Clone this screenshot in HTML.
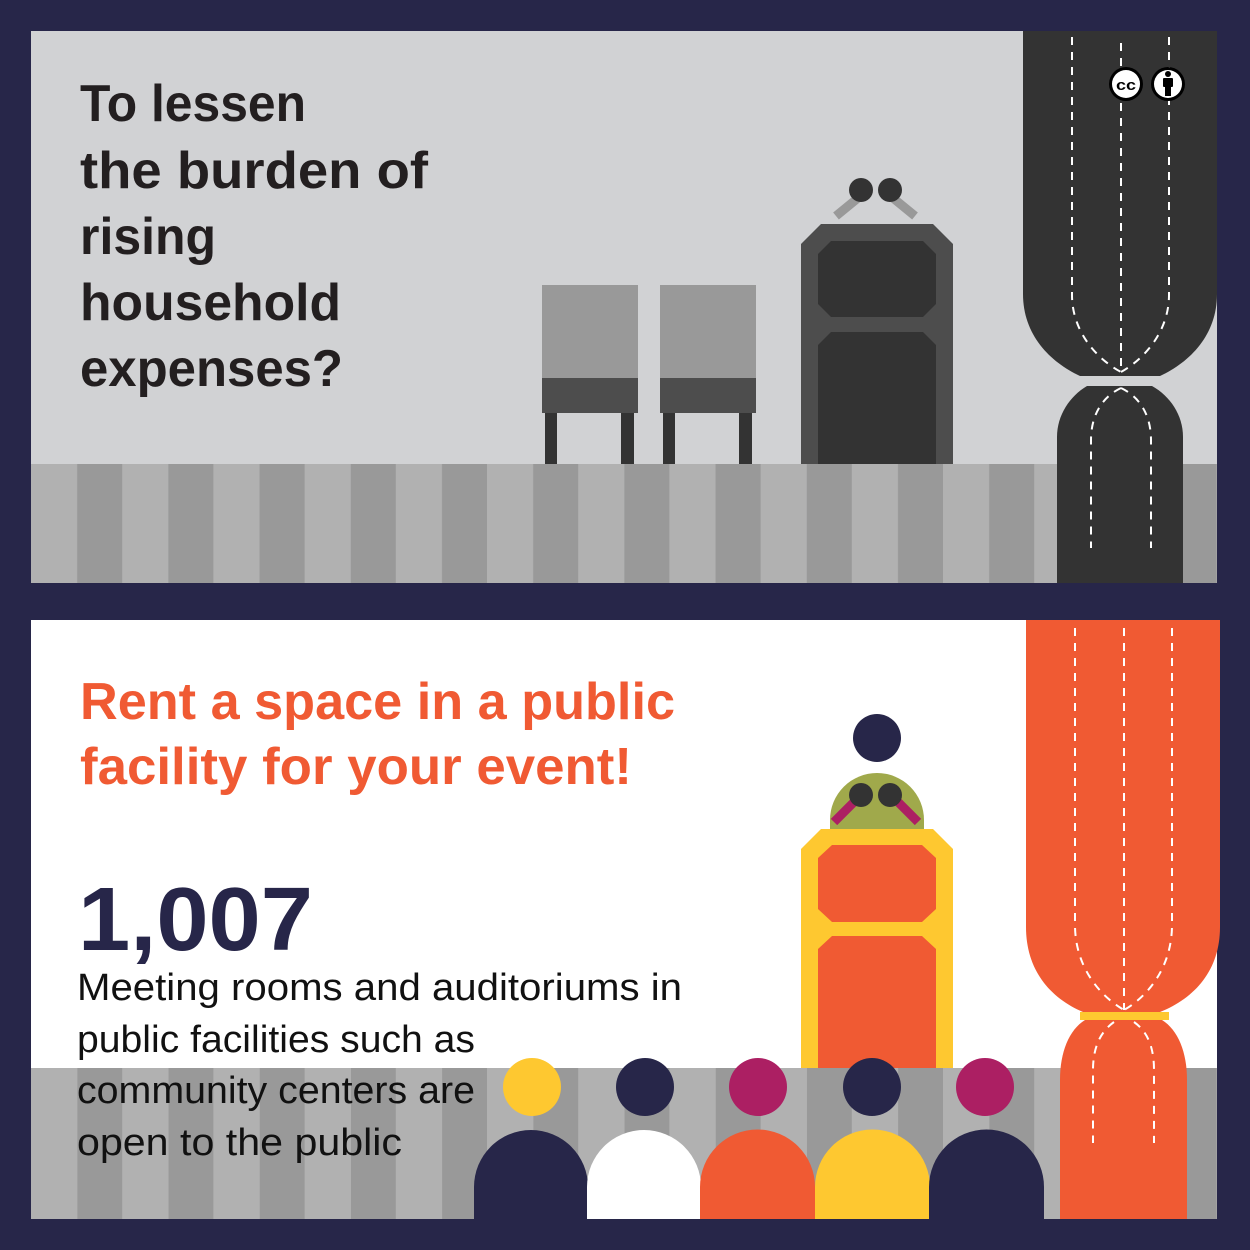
<!DOCTYPE html>
<html><head><meta charset="utf-8"><style>
html,body{margin:0;padding:0;background:#272649;}
svg{display:block}
</style></head><body>
<svg width="1250" height="1250" viewBox="0 0 1250 1250" xmlns="http://www.w3.org/2000/svg">
<defs>
<pattern id="st" patternUnits="userSpaceOnUse" x="31" y="0" width="91.2" height="10">
<rect x="0" y="0" width="46" height="10" fill="#b1b1b1"/>
<rect x="46" y="0" width="45.2" height="10" fill="#999999"/>
</pattern>
</defs>
<rect width="1250" height="1250" fill="#272649"/>
<!-- TOP PANEL -->
<rect x="31" y="31" width="1186" height="552" fill="#d1d2d4"/>
<rect x="31" y="464" width="1186" height="119" fill="url(#st)"/>
<g>
<rect x="542" y="285" width="96" height="93" fill="#999"/>
<rect x="542" y="378" width="96" height="35" fill="#4d4d4d"/>
<rect x="545" y="413" width="12" height="51" fill="#333"/>
<rect x="621" y="413" width="13" height="51" fill="#333"/>
<rect x="660" y="285" width="96" height="93" fill="#999"/>
<rect x="660" y="378" width="96" height="35" fill="#4d4d4d"/>
<rect x="663" y="413" width="12" height="51" fill="#333"/>
<rect x="739" y="413" width="13" height="51" fill="#333"/>
</g>
<line x1="836" y1="216" x2="858" y2="198" stroke="#999" stroke-width="9"/>
<line x1="915" y1="216" x2="893" y2="198" stroke="#999" stroke-width="9"/>
<ellipse cx="861" cy="190" rx="12" ry="12" fill="#333"/>
<ellipse cx="890" cy="190" rx="12" ry="12" fill="#333"/>
<polygon points="821,224 933,224 953,244 953,464 801,464 801,244" fill="#4d4d4d"/>
<polygon points="831,241 923,241 936,254 936,304 923,317 831,317 818,304 818,254" fill="#333"/>
<polygon points="831,332 923,332 936,345 936,464 818,464 818,345" fill="#333"/>
<path d="M1023,31 H1217 V294 C1217,335 1190,362 1160,376 H1080 C1050,362 1023,335 1023,294 Z" fill="#333"/>
<path d="M1087,386 H1152 C1170,396 1183,415 1183,437 V583 H1057 V437 C1057,415 1070,396 1087,386 Z" fill="#333"/>
<g fill="none" stroke="#fff" stroke-width="2" stroke-dasharray="8,7">
<line x1="1121" y1="43" x2="1121" y2="372"/>
<path d="M1072,37 V295 C1072,330 1095,358 1121,372"/>
<path d="M1169,37 V295 C1169,330 1146,358 1121,372"/>
<path d="M1121,388 C1100,398 1091,418 1091,440 V548"/>
<path d="M1121,388 C1142,398 1151,418 1151,440 V548"/>
</g>
<circle cx="1126" cy="84" r="17" fill="#000"/>
<circle cx="1126" cy="84" r="14" fill="#fff"/>
<text x="1126" y="90" font-family="Liberation Sans, sans-serif" font-weight="bold" font-size="15" text-anchor="middle" fill="#000" textLength="20" lengthAdjust="spacingAndGlyphs">cc</text>
<circle cx="1168" cy="84" r="17" fill="#000"/>
<circle cx="1168" cy="84" r="14" fill="#fff"/>
<circle cx="1168" cy="74" r="3" fill="#000"/>
<rect x="1163" y="78" width="10" height="9" rx="1" fill="#000"/>
<rect x="1165" y="86" width="6" height="10" fill="#000"/>
<g font-family="Liberation Sans, sans-serif" font-weight="bold" font-size="52" fill="#231f20">
<text x="80" y="121" textLength="226" lengthAdjust="spacingAndGlyphs">To lessen</text>
<text x="80" y="188" textLength="348" lengthAdjust="spacingAndGlyphs">the burden of</text>
<text x="80" y="254" textLength="136" lengthAdjust="spacingAndGlyphs">rising</text>
<text x="80" y="320" textLength="261" lengthAdjust="spacingAndGlyphs">household</text>
<text x="80" y="386" textLength="263" lengthAdjust="spacingAndGlyphs">expenses?</text>
</g>
<!-- BOTTOM PANEL -->
<rect x="31" y="620" width="1186" height="599" fill="#fff"/>
<rect x="31" y="1068" width="1186" height="151" fill="url(#st)"/>
<path d="M1026,620 H1220 V927 C1220,970 1195,998 1160,1012 H1083 C1050,998 1026,970 1026,927 Z" fill="#f05a33"/>
<path d="M1085,1020 H1162 C1178,1030 1187,1052 1187,1080 V1219 H1060 V1080 C1060,1052 1069,1030 1085,1020 Z" fill="#f05a33"/>
<rect x="1080" y="1012" width="89" height="8" fill="#fec830"/>
<g fill="none" stroke="#fff" stroke-width="2" stroke-dasharray="8,7">
<line x1="1124" y1="628" x2="1124" y2="1010"/>
<path d="M1075,628 V925 C1075,965 1098,995 1124,1010"/>
<path d="M1172,628 V925 C1172,965 1150,995 1124,1010"/>
<path d="M1114,1022 C1100,1032 1093,1048 1093,1070 V1143"/>
<path d="M1134,1022 C1148,1032 1154,1048 1154,1070 V1143"/>
</g>
<circle cx="877" cy="738" r="24" fill="#272649"/>
<path d="M830,829 V820 A47,47 0 0 1 924,820 V829 Z" fill="#a0a94b"/>
<line x1="834" y1="822" x2="855" y2="801" stroke="#ac1f63" stroke-width="9"/>
<line x1="918" y1="822" x2="897" y2="801" stroke="#ac1f63" stroke-width="9"/>
<circle cx="861" cy="795" r="12" fill="#333"/>
<circle cx="890" cy="795" r="12" fill="#333"/>
<polygon points="821,829 933,829 953,849 953,1068 801,1068 801,849" fill="#fec830"/>
<polygon points="832,845 922,845 936,858 936,909 922,922 832,922 818,909 818,858" fill="#f05a33"/>
<polygon points="832,936 922,936 936,949 936,1068 818,1068 818,949" fill="#f05a33"/>
<circle cx="532" cy="1087" r="29" fill="#fec830"/>
<circle cx="645" cy="1087" r="29" fill="#272649"/>
<circle cx="758" cy="1087" r="29" fill="#ac1f63"/>
<circle cx="872" cy="1087" r="29" fill="#272649"/>
<circle cx="985" cy="1087" r="29" fill="#ac1f63"/>
<path d="M474,1219 V1187 A57,57 0 0 1 588,1187 V1219 Z" fill="#272649"/>
<path d="M587,1219 V1187 A57,57 0 0 1 701,1187 V1219 Z" fill="#fff"/>
<path d="M700,1219 V1187 A57.5,57.5 0 0 1 815,1187 V1219 Z" fill="#f05a33"/>
<path d="M815,1219 V1187 A57.5,57.5 0 0 1 930,1187 V1219 Z" fill="#fec830"/>
<path d="M929,1219 V1187 A57.5,57.5 0 0 1 1044,1187 V1219 Z" fill="#272649"/>
<g font-family="Liberation Sans, sans-serif" font-weight="bold" font-size="52" fill="#f05a33">
<text x="80" y="719" textLength="595" lengthAdjust="spacingAndGlyphs">Rent a space in a public</text>
<text x="80" y="784" textLength="552" lengthAdjust="spacingAndGlyphs">facility for your event!</text>
</g>
<text x="78" y="950" font-family="Liberation Sans, sans-serif" font-weight="bold" font-size="90" fill="#272649" textLength="235" lengthAdjust="spacingAndGlyphs">1,007</text>
<g font-family="Liberation Sans, sans-serif" font-size="38" fill="#111">
<text x="77" y="1000" textLength="605" lengthAdjust="spacingAndGlyphs">Meeting rooms and auditoriums in</text>
<text x="77" y="1052" textLength="398" lengthAdjust="spacingAndGlyphs">public facilities such as</text>
<text x="77" y="1103" textLength="398" lengthAdjust="spacingAndGlyphs">community centers are</text>
<text x="77" y="1155" textLength="325" lengthAdjust="spacingAndGlyphs">open to the public</text>
</g>
</svg>
</body></html>
